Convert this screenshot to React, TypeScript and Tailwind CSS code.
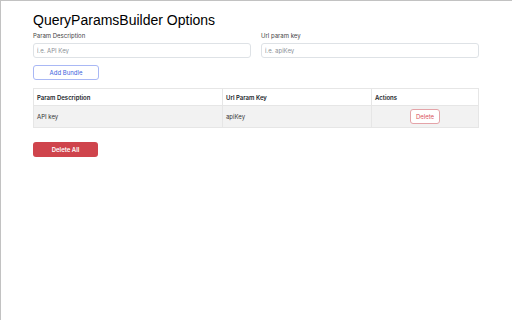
import React from "react"

const rows = [{ description: "API key", key: "apiKey" }]

const App = () => {
  return (
    <div className="w-[512px] h-[320px] bg-white border-t border-l border-[#c2c2c2] font-['Inter',sans-serif] text-[#212529]">
      <div className="w-[446px] ml-[32px] pt-[9px]">
        <h1 className="text-[14px] leading-[20px] font-normal text-black font-['Liberation_Sans','Inter',sans-serif]">
          QueryParamsBuilder Options
        </h1>
        <div className="grid grid-cols-2 gap-[10px] mt-[2px]">
          <label className="flex flex-col">
            <span className="text-[6px] leading-[8px] text-[#444]">Param Description</span>
            <input
              className="mt-[3px] h-[15px] px-[3px] text-[6px] border border-[#dee2e6] rounded-[3px] outline-none placeholder:text-[#8a8f96]"
              placeholder="i.e. API Key"
            />
          </label>
          <label className="flex flex-col">
            <span className="text-[6px] leading-[8px] text-[#444]">Url param key</span>
            <input
              className="mt-[3px] h-[15px] px-[3px] text-[6px] border border-[#dee2e6] rounded-[3px] outline-none placeholder:text-[#8a8f96]"
              placeholder="i.e. apiKey"
            />
          </label>
        </div>
        <button className="block mt-[7px] w-[66px] h-[15px] border border-[#a9b8f5] rounded-[3px] text-[6px] text-[#3d63dd] bg-white">
          Add Bundle
        </button>
        <table className="mt-[8px] w-full border-collapse text-[6px] border border-[#e6e6e6]">
          <thead>
            <tr className="h-[17px]">
              <th className="w-[189px] text-left font-semibold pl-[3px] border border-[#e6e6e6]">
                Param Description
              </th>
              <th className="w-[149px] text-left font-semibold pl-[3px] border border-[#e6e6e6]">
                Url Param Key
              </th>
              <th className="text-left font-semibold pl-[3px] border border-[#e6e6e6]">Actions</th>
            </tr>
          </thead>
          <tbody>
            {rows.map((row) => (
              <tr key={row.key} className="h-[22px] bg-[#f2f2f2]">
                <td className="pl-[3px] border border-[#e6e6e6] text-[#333]">{row.description}</td>
                <td className="pl-[3px] border border-[#e6e6e6] text-[#333]">{row.key}</td>
                <td className="border border-[#e6e6e6] text-center">
                  <button className="w-[30px] h-[15px] border border-[#e4a3a8] rounded-[3px] text-[#d9535c] bg-white">
                    Delete
                  </button>
                </td>
              </tr>
            ))}
          </tbody>
        </table>
        <button className="block mt-[14px] w-[65px] h-[15px] rounded-[3px] bg-[#cf444c] text-white text-[6px] font-semibold">
          Delete All
        </button>
      </div>
    </div>
  )
}

export default App
